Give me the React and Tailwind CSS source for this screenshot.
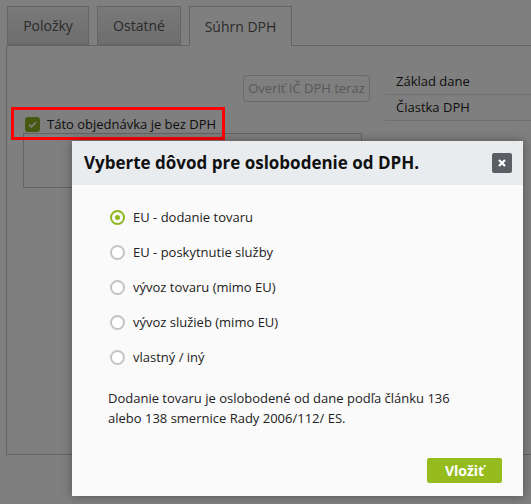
import { useState } from "react";

const reasons = [
  "EU - dodanie tovaru",
  "EU - poskytnutie služby",
  "vývoz tovaru (mimo EU)",
  "vývoz služieb (mimo EU)",
  "vlastný / iný",
];

function Radio({ checked }) {
  return checked ? (
    <span className="w-[15px] h-[15px] rounded-full border-[2px] border-[#8db51f] flex items-center justify-center shrink-0">
      <span className="w-[5px] h-[5px] rounded-full bg-[#8db51f]" />
    </span>
  ) : (
    <span className="w-[15px] h-[15px] rounded-full border-[2px] border-[#c4c4c4] bg-white shrink-0" />
  );
}

export default function App() {
  const [selected, setSelected] = useState(0);

  return (
    <div
      className="relative w-[531px] h-[504px] overflow-hidden bg-white text-[13px] text-[#222]"
      style={{ fontFamily: '"Open Sans", "Noto Sans", sans-serif' }}
    >
      {/* 🔹 Tabs */}
      <div className="flex items-end gap-[8px] pl-[7px] pt-[5px] h-[45px]">
        <div className="w-[82px] h-[39px] border border-[#c9c9c9] bg-gradient-to-b from-[#f2f2f2] to-[#dcdcdc] text-[#555] text-[14px] flex items-center justify-center">
          Položky
        </div>
        <div className="w-[84px] h-[39px] border border-[#c9c9c9] bg-gradient-to-b from-[#f2f2f2] to-[#dcdcdc] text-[#555] text-[14px] flex items-center justify-center">
          Ostatné
        </div>
        <div className="relative z-10 w-[103px] h-[40px] -mb-px border border-b-0 border-[#c9c9c9] bg-white text-[#555] text-[14px] flex items-center justify-center">
          Súhrn DPH
        </div>
      </div>

      {/* 🔹 Panel */}
      <div className="ml-[6px] h-[410px] border-l border-t border-b border-[#c9c9c9] flex">
        <div className="w-[363px] pl-[4px] pt-[29px]">
          <div className="flex justify-end">
            <button
              type="button"
              disabled
              className="w-[127px] h-[27px] border border-[#d4d4d4] rounded-[3px] text-[#b0b0b0] text-[13px]"
            >
              Overiť IČ DPH teraz
            </button>
          </div>
          <div className="relative mt-[5px] h-[33px] w-[214px]">
            <div className="absolute inset-0 border-[3px] border-[#ff0000] z-[25]" />
            <label className="flex items-center gap-[7px] pl-[14px] pt-[8px] text-[13px] text-[#222] whitespace-nowrap">
              <span className="w-[15px] h-[15px] rounded-[3px] bg-[#8fb021] flex items-center justify-center shrink-0">
                <svg width="9" height="7" viewBox="0 0 9 7">
                  <path d="M1 3.5 L3.4 5.8 L8 1.2" fill="none" stroke="white" strokeWidth="1.6" />
                </svg>
              </span>
              Táto objednávka je bez DPH
            </label>
          </div>
          <div className="ml-[12px] -mt-[7px] w-[339px] h-[55px] border border-[#c9c9c9]" />
        </div>

        <div className="ml-[15px] flex-1 pt-[23px] text-[13px]">
          <div className="h-[26px] pl-[11px] flex items-center border-b border-[#e2e2e2]">
            Základ dane
          </div>
          <div className="h-[26px] pl-[11px] flex items-center border-b border-[#e2e2e2]">
            Čiastka DPH
          </div>
        </div>
      </div>

      {/* 🔹 Overlay */}
      <div className="absolute inset-0 bg-black/50 z-20" />

      {/* 🔹 Modal */}
      <div className="absolute left-[72px] top-[141px] w-[451px] h-[355px] bg-[#fafafa] z-30 shadow-[0_0_10px_rgba(0,0,0,0.35)] flex flex-col">
        <div className="h-[44px] bg-[#e8ecef] flex items-center justify-between pl-[12px] pr-[11px]">
          <h2 className="text-[17px] font-bold text-[#111]">
            Vyberte dôvod pre oslobodenie od DPH.
          </h2>
          <button
            type="button"
            className="w-[20px] h-[20px] rounded-[2px] bg-[#5b5f63] flex items-center justify-center"
          >
            <svg width="8" height="8" viewBox="0 0 8 8">
              <path d="M1 1 L7 7 M7 1 L1 7" stroke="white" strokeWidth="2.2" />
            </svg>
          </button>
        </div>

        <div className="pt-[15px] pl-[38px]">
          {reasons.map((r, i) => (
            <div
              key={r}
              onClick={() => setSelected(i)}
              className="h-[35px] flex items-center gap-[8px] cursor-pointer"
            >
              <Radio checked={selected === i} />
              <span className="text-[13px] text-[#222]">{r}</span>
            </div>
          ))}
        </div>

        <p className="mt-[13px] pl-[36px] pr-[20px] text-[13px] leading-[20px] text-[#222]">
          Dodanie tovaru je oslobodené od dane podľa článku 136
          <br />
          alebo 138 smernice Rady 2006/112/ ES.
        </p>

        <div className="mt-auto flex justify-end pr-[21px] pb-[13px]">
          <button
            type="button"
            className="w-[75px] h-[25px] rounded-[2px] bg-[#95bb1d] text-white font-bold text-[14px]"
          >
            Vložiť
          </button>
        </div>
      </div>
    </div>
  );
}
